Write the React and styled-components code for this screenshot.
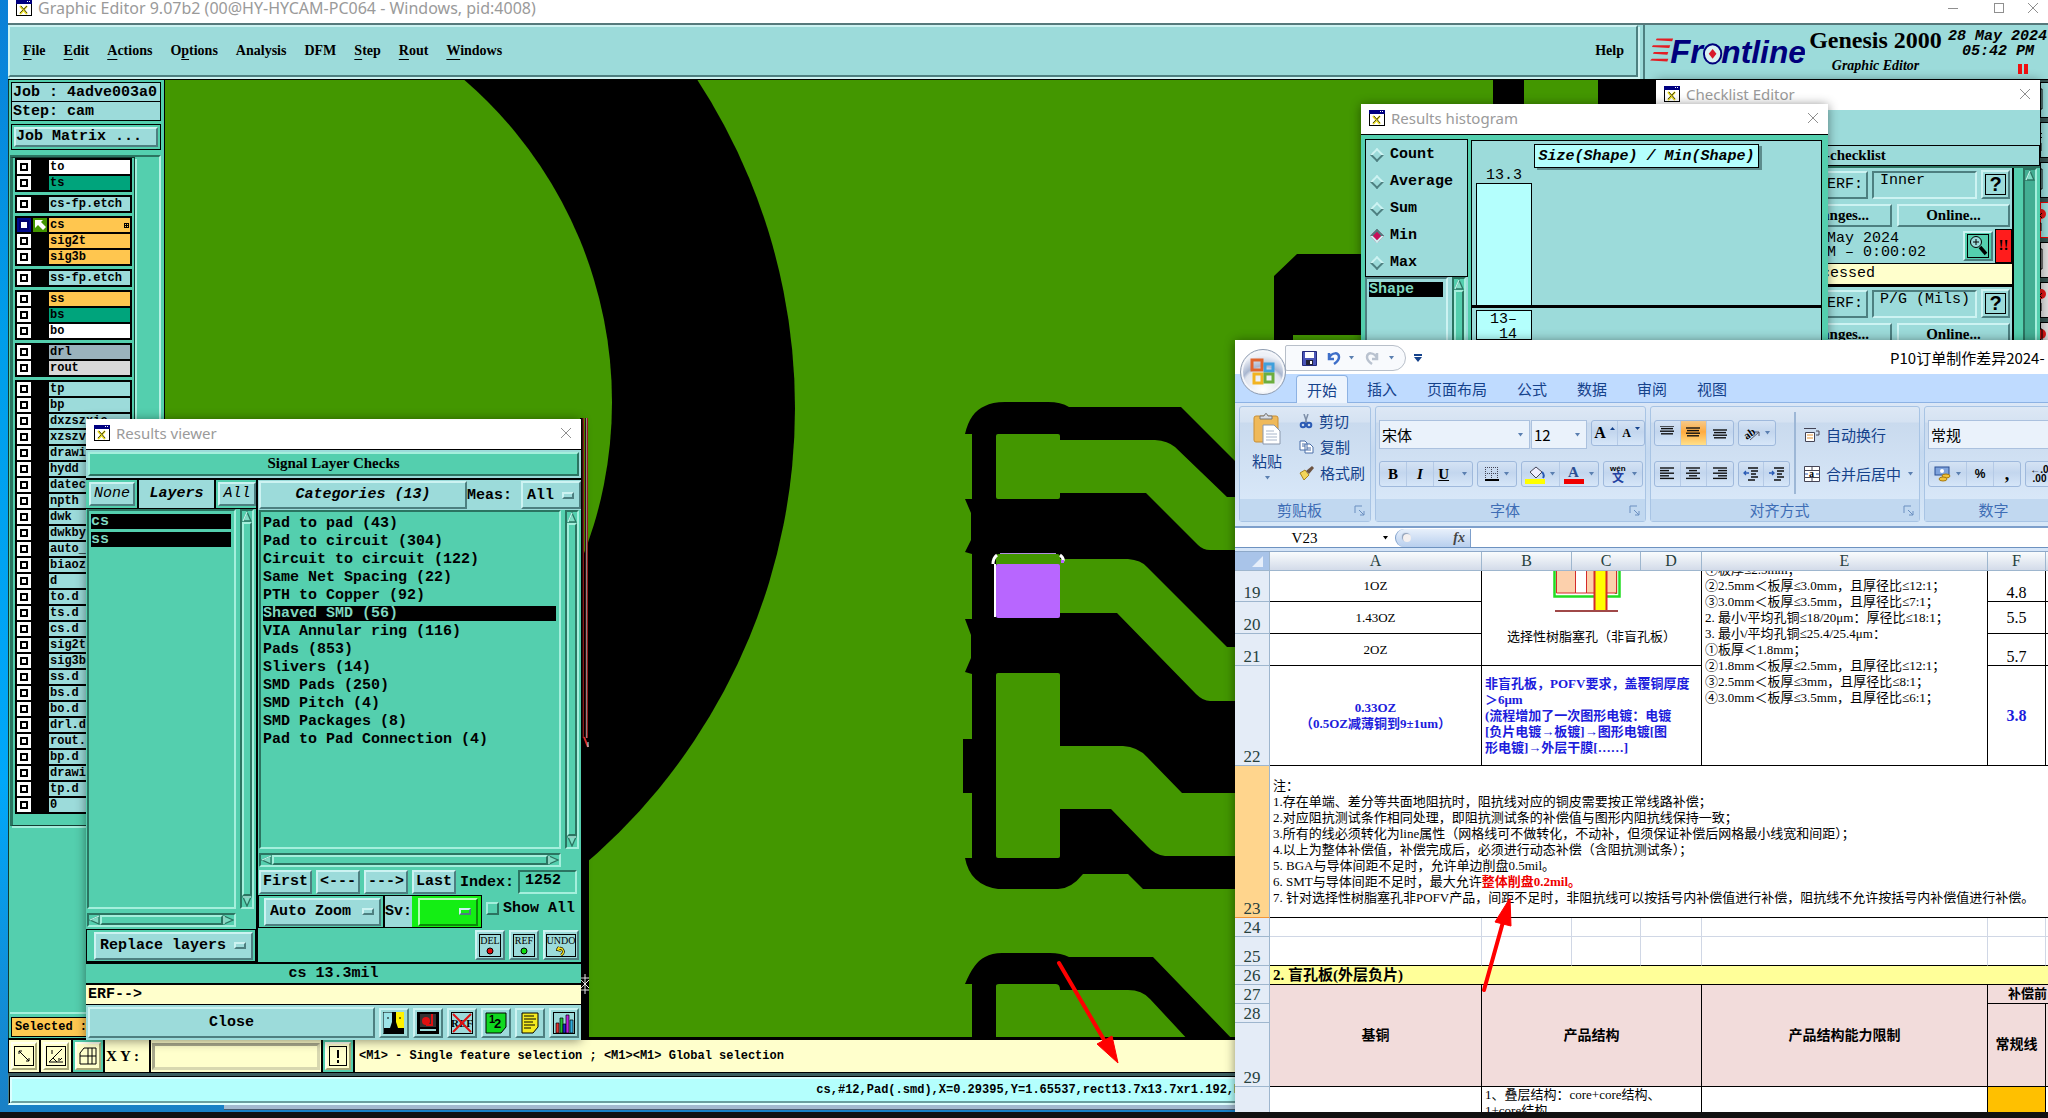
import React, { useState } from 'react';
import styled, { createGlobalStyle, css } from 'styled-components';

const MONO = '"Liberation Mono", monospace';
const SERIF = '"Liberation Serif", "Noto Sans CJK SC", serif';
const UI = '"Noto Sans", "Noto Sans CJK SC", sans-serif';
const CJK = '"Noto Sans CJK SC", sans-serif';

const AQUA = '#9cdbda';
const TEAL = '#54cfae';
const CREAM = '#ffffcc';
const GREEN = '#439700';

const GlobalStyle = createGlobalStyle`
  *, *::after { box-sizing: border-box; }
  body { margin: 0; overflow: hidden; font-family: ${MONO}; color: #000; }
  button, input, select { font: inherit; color: inherit; margin: 0; padding: 0; border-radius: 0; }
  svg { display: block; }
`;

// Motif style bevels
const raised = css`
  border: 2px solid;
  border-color: #cdf3f2 #4d7f80 #4d7f80 #cdf3f2;
`;
const raisedTeal = css`
  border: 2px solid;
  border-color: #a4efdc #2b7461 #2b7461 #a4efdc;
`;
const sunkenTeal = css`
  border: 2px solid;
  border-color: #2b7461 #a4efdc #a4efdc #2b7461;
`;

/* ---------- desktop ---------- */

const Desktop = styled.div`
  display: flex;
  flex-direction: column;
  height: 100vh;
  background: linear-gradient(#0b7fd6, #009eea 30%, #00a8fa 70%, #1a7fc4);
`;

const Workspace = styled.main`
  position: relative;
  flex: 1;
  overflow: hidden;
`;

const Taskbar = styled.footer`
  height: 6px;
  background: #111;
`;

const BackWindow = styled.div`
  position: absolute;
  left: 224px;
  right: 0;
  bottom: 2px;
  height: 8px;
  background: #a3bad0;
  border-bottom: 1px solid #45586c;
`;

const Window = styled.section`
  position: absolute;
  display: flex;
  flex-direction: column;
  overflow: hidden;
  box-shadow: ${p => (p.flat ? 'none' : '0 1px 10px rgba(0, 0, 0, 0.45)')};
  left: ${p => p.left}px;
  top: ${p => p.top}px;
  ${p => (p.width ? `width: ${p.width}px;` : 'right: 0;')}
  ${p => p.bottom !== undefined && `bottom: ${p.bottom}px;`}
  ${p => p.height && `height: ${p.height}px;`}
`;

const TitleBar = styled.header`
  display: flex;
  flex: none;
  align-items: center;
  gap: 6px;
  height: ${p => (p.cut ? 23 : 30)}px;
  padding: ${p => (p.cut ? '0 7px 8px 8px' : '0 7px 2px 8px')};
  background: #fff;
  color: #9a9a9a;
  font-family: ${UI};
  font-size: ${p => (p.cut ? 16 : 15)}px;
  line-height: 16px;
  white-space: nowrap;
  h2 {
    flex: 1;
    margin: 0;
    font: inherit;
  }
`;

const WinButton = styled.button`
  display: grid;
  place-items: center;
  width: ${p => (p.wide ? 40 : 16)}px;
  height: 16px;
  border: 0;
  background: none;
`;

const XIcon = () => (
  <svg width="16" height="16" viewBox="0 0 16 16">
    <rect x="0.5" y="0.5" width="15" height="15" fill="#fff" stroke="#000" />
    <rect x="0" y="0" width="16" height="4" fill="#000080" />
    <rect x="11" y="1" width="1" height="1" fill="#fff" />
    <rect x="13" y="1" width="1" height="1" fill="#fff" />
    <path d="M4 6l7 8M11 6l-7 8" stroke="#e8dc20" strokeWidth="2" />
    <path d="M5 6l6 7M11 6l-3 3M7 10l-3 3" stroke="#222" strokeWidth="0.8" />
  </svg>
);

const CloseX = () => (
  <svg width="12" height="12" viewBox="0 0 12 12" stroke="#8f8f8f" fill="none">
    <path d="M1 1l10 10M11 1L1 11" />
  </svg>
);

const Title = ({ children }) => (
  <TitleBar>
    <XIcon />
    <h2>{children}</h2>
    <WinButton aria-label="Close window"><CloseX /></WinButton>
  </TitleBar>
);

/* ---------- menu bar ---------- */

const TopRow = styled.div`
  display: flex;
  flex: none;
  height: 57px;
  background: ${AQUA};
  border-top: 2px solid #56797b;
  border-bottom: 1px solid #000;
`;

const MenuBar = styled.nav`
  display: flex;
  flex: 1;
  align-items: center;
  gap: 18px;
  padding: 0 12px 0 13px;
  border: 2px solid;
  border-color: #cdf3f2 #4d7f80 #4d7f80 #cdf3f2;
  box-shadow: 2px 2px 0 #cdf3f2;
  margin: 0 5px 2px 0;
`;

const MenuItem = styled.button`
  border: 0;
  background: none;
  font: bold 14px/18px ${SERIF};
  ${p => p.last && 'margin-left: auto;'}
  u {
    text-underline-offset: 4px;
  }
`;

const Brand = styled.div`
  display: flex;
  gap: 4px;
  width: 405px;
  padding: 4px 0 0 5px;
  border-left: 2px solid #4d7f80;
  overflow: hidden;
  white-space: nowrap;
`;

const BrandName = styled.div`
  width: 138px;
  text-align: center;
  font-family: ${SERIF};
  strong {
    display: block;
    font-size: 24px;
    line-height: 22px;
  }
  em {
    display: block;
    margin-top: 8px;
    font-size: 14px;
    line-height: 14px;
    font-weight: bold;
  }
`;

const Clock = styled.time`
  flex: none;
  width: 100px;
  margin-left: 2px;
  font: italic bold 15px/15px ${MONO};
  span {
    display: block;
    padding-right: 14px;
    text-align: right;
  }
  svg {
    margin: 5px 0 0 70px;
  }
`;

const FrontlineLogo = () => (
  <svg width="161" height="40" viewBox="0 0 161 40" aria-label="Frontline">
    <g fill="#e31e24">
      <path d="M7 9h17l-1 3-17-1zM3 16h18l-1 3-18-1zM4 23h15l-1 3-15-1zM2 30h17l-1 3-18-1z" />
    </g>
    <text x="21" y="35" fontFamily="Liberation Sans, sans-serif" fontSize="34" fontWeight="bold" fontStyle="italic" fill="#00007c">Fr</text>
    <ellipse cx="65" cy="25" rx="9" ry="10" fill="#d9f2f2" stroke="#00007c" strokeWidth="2" />
    <path d="M65 20l4 5-4 5-4-5z" fill="#d81a2c" />
    <text x="74" y="35" fontFamily="Liberation Sans, sans-serif" fontSize="33" fontWeight="bold" fontStyle="italic" fill="#00007c">ntline</text>
  </svg>
);

const MENUS = [
  ['F', 'ile'], ['E', 'dit'], ['A', 'ctions'], ['O', 'ptions', 'p'], ['', 'Analysis'],
  ['', 'DFM'], ['S', 'tep'], ['R', 'out'], ['W', 'indows'],
];

/* ---------- layer panel ---------- */

const Body = styled.div`
  display: flex;
  flex: 1;
  min-height: 0;
`;

const Side = styled.aside`
  display: flex;
  flex-direction: column;
  flex: none;
  width: 157px;
  padding: 2px 3px 0 1px;
  background: ${TEAL};
  border-left: 1px solid #143c32;
  border-right: 1px solid #000;
`;

const JobLine = styled.div`
  height: 20px;
  margin: 0 0 -1px 1px;
  padding: 0 1px;
  border: 1px solid #000;
  background: ${AQUA};
  font-size: 15px;
  line-height: 19px;
  font-weight: bold;
  white-space: nowrap;
  overflow: hidden;
`;

const MatrixFrame = styled.div`
  height: 26px;
  margin: 4px 0 5px 1px;
  padding: 2px;
  border: 1px solid #000;
`;

const MatrixButton = styled.button`
  ${raised}
  display: block;
  width: 100%;
  height: 20px;
  background: ${AQUA};
  font-size: 15px;
  line-height: 16px;
  font-weight: bold;
  text-align: left;
`;

const LayerWell = styled.div`
  flex: 1;
  min-height: 0;
  border-top: 2px solid #2b7461;
  border-right: 2px solid #b7f1e4;
  border-bottom: 2px solid #a4efdc;
`;

const LayerList = styled.ul`
  display: flex;
  flex-direction: column;
  gap: 3px;
  width: 125px;
  height: 669px;
  margin: 0;
  padding: 0 0 0 2px;
  list-style: none;
  border: 1px solid #143c32;
  border-left: 3px solid #2b7461;
  box-shadow: 2px 2px 0 #a4efdc;
`;

const LayerGroup = styled.li`
  display: grid;
  gap: 2px;
  width: 117px;
  padding: 2px;
  background: #000;
`;

const LayerRow = styled.label`
  display: grid;
  grid-template-columns: 14px 14px 1fr;
  gap: 2px;
  height: 14px;
  font-size: 12px;
  line-height: 14px;
  font-weight: bold;
`;

const LayerBox = styled.input`
  appearance: none;
  width: 14px;
  height: 14px;
  background: #fff;
  box-shadow: inset 0 0 0 3px #fff, inset 0 0 0 5px #000;
  &:checked {
    box-shadow: inset 0 0 0 2px #000a8c, inset 0 0 0 4px #00006c;
  }
`;

const LayerName = styled.span`
  display: flex;
  align-items: center;
  justify-content: space-between;
  padding: 0 1px;
  background: ${p => p.tone};
  overflow: hidden;
`;

const SelectedCount = styled.div`
  height: 20px;
  margin: 3px 0 1px 1px;
  padding: 0 3px;
  border: 1px solid #000;
  background: #ffc850;
  font-size: 12px;
  line-height: 18px;
  font-weight: bold;
`;

const ORANGE = '#ffc64f';
const PINE = '#00a47c';
const rest = names => names.split(' ').map(name => [name, AQUA]);

const LAYERS = [
  [['to', '#fff'], ['ts', PINE]],
  [['cs-fp.etch', AQUA]],
  [['cs', ORANGE], ['sig2t', ORANGE], ['sig3b', ORANGE]],
  [['ss-fp.etch', AQUA]],
  [['ss', ORANGE], ['bs', PINE], ['bo', '#fff']],
  [['drl', '#9ab2bc'], ['rout', '#d8d8d8']],
  rest('tp bp dxzszxie xzszv drawing hydd datecode npth dwk dwkby auto_ biaozhu d to.d ts.d cs.d sig2t.d sig3b.d ss.d bs.d bo.d drl.d rout.d bp.d drawing.d tp.d 0'),
];

const LayerPanel = () => {
  const [active, setActive] = useState('cs');
  return (
    <Side>
      <JobLine>Job : 4adve003a0</JobLine>
      <JobLine>Step: cam</JobLine>
      <MatrixFrame><MatrixButton>Job Matrix ...</MatrixButton></MatrixFrame>
      <LayerWell>
        <LayerList>
          {LAYERS.map(group => (
            <LayerGroup key={group[0][0]}>
              {group.map(([name, tone]) => (
                <LayerRow key={name}>
                  <LayerBox type="checkbox" checked={active === name} onChange={() => setActive(name)} />
                  {active === name ? (
                    <svg width="14" height="14" viewBox="0 0 14 14">
                      <rect width="14" height="14" fill={GREEN} />
                      <path d="M2 2h8L8 4l5 5-3 3-5-5-3 3z" fill="#fff" />
                    </svg>
                  ) : <span />}
                  <LayerName tone={tone}>
                    {name}
                    {active === name && (
                      <svg width="5" height="5" viewBox="0 0 5 5"><path d="M0 0h5v5H0zM1 1v1h1V1zM3 1v1h1V1zM1 3v1h1V3zM3 3v1h1V3z" fillRule="evenodd" /></svg>
                    )}
                  </LayerName>
                </LayerRow>
              ))}
            </LayerGroup>
          ))}
        </LayerList>
      </LayerWell>
      <SelectedCount>Selected :</SelectedCount>
    </Side>
  );
};

/* ---------- board canvas ---------- */

const CanvasBox = styled.div`
  flex: 1;
  min-width: 0;
  overflow: hidden;
  background: ${GREEN};
  border-bottom: 1px solid #000;
`;

const Board = () => (
  <CanvasBox>
    <svg width="100%" height="100%">
      <g transform="translate(-165 -80)">
        <circle cx="195" cy="408" r="600" />
        <circle cx="187" cy="402" r="425" fill={GREEN} />
        <path d="M165 863h424v200H165z" fill={GREEN} />
        <path d="M580 418h3v320h-3zM580 560h9v478h-9z" />
        <path d="M583.500 418V738M587.500 418V738" fill="none" stroke="#a02020" />
        <path d="M582.500 418V738M585.500 418V738" fill="none" stroke="#3a1010" />
        <path d="M586.500 418V738" fill="none" stroke="#9a8a8a" />
        <path d="M584 737l4 10" stroke="#f03030" strokeWidth="2" />
        <path d="M588 742v5" stroke="#bff" />
        <path d="M965 434Q970 412 985 406Q992 402 1005 402H1048Q1061 402 1069 407H1181L1240 466V889H1143L1128 874H1083Q1071 889 1058 889H998Q970 885 965 858H972V793H963V739H972V674L965 672L971 658V635L965 619H972V554L965 552L971 540V513L965 499H972V434Z" />
        <g fill={GREEN}>
          <rect x="996" y="434" width="64" height="65" rx="2" />
          <path d="M1058 440H1155Q1168 441 1175 447L1227 497H1240V550H1210Q1203 550 1198 545L1146 493H1058Z" />
          <path d="M1058 559H1128Q1141 560 1147 567L1227 647H1240V701H1210Q1203 701 1196 694L1117 613H1058Z" />
          <rect x="996" y="673" width="64" height="185" rx="2" />
          <path d="M1058 746H1123Q1138 747 1147 757L1182 793H1240V856H1165Q1155 855 1147 846L1111 809H1058Z" />
          <rect x="996" y="554" width="64" height="12" rx="3" />
        </g>
        <rect x="996" y="564" width="64" height="54" rx="2" fill="#b866ff" />
        <path d="M1000 553.500H1056" stroke="#b090e0" />
        <path d="M997 555q-4 3-4 9M1060 555q4 3 3 6" fill="none" stroke="#fff" strokeWidth="3" />
        <path d="M995 564V617" stroke="#fff" strokeWidth="2" />
        <path d="M1061 560h3v3h-3z" fill="#b866ff" />
        <path d="M965 984Q974 962 985 957Q992 953 1002 953H1050Q1061 953 1069 957H1153L1235 1042H972V984Z" />
        <path d="M996 1042V986q0-2 3-2H1056q4 0 4 6H1128Q1142 990 1150 999L1190 1042Z" fill={GREEN} />
        <path d="M1274 276L1297 254H1370V335H1293V345H1274ZM1493 80h31v30h-31zM1598 80h60v30h-60z" />
        <path d="M585 974v20M581 978h8M581 990h8M581 980l8 8M589 980l-8 8" stroke="#fff" fill="none" />
      </g>
    </svg>
  </CanvasBox>
);

const ToolStrip = styled.div`
  width: 8px;
  flex: none;
  display: flex;
  flex-direction: column;
  gap: 4px;
  padding-top: 2px;
  background: #35524f;
  overflow: hidden;
`;

const StripButton = styled.button`
  flex: none;
  width: 30px;
  height: 36px;
  border: 1px solid ${p => (p.hot ? '#e00' : '#000')};
  background: ${p => p.tone || AQUA};
  svg {
    margin-left: -4px;
  }
`;

/* ---------- bottom bars ---------- */

const CommandRow = styled.div`
  display: flex;
  flex: none;
  gap: 2px;
  height: 35px;
  padding: 2px 0 1px 1px;
  background: #000;
`;

const CreamCell = styled.div`
  display: flex;
  align-items: center;
  flex: ${p => (p.grow ? 1 : 'none')};
  padding: ${p => p.pad || '0 2px'};
  background: ${p => (p.teal ? TEAL : CREAM)};
  font: bold ${p => (p.big ? '15px/18px' : '12px/16px')} ${p => (p.big ? SERIF : MONO)};
  white-space: nowrap;
`;

const CreamButton = styled.button`
  display: grid;
  place-items: center;
  width: 26px;
  height: 28px;
  border: 2px solid;
  border-color: #fffff0 #a8a878 #a8a878 #fffff0;
  background: ${CREAM};
  svg {
    width: 20px;
    height: 20px;
  }
`;

const CoordInput = styled.input`
  width: 168px;
  height: 27px;
  border: 3px solid;
  border-color: #a8a88c #d8d8b0 #d8d8b0 #a8a88c;
  background: ${CREAM};
  outline: 0;
  font-size: 14px;
`;

const InfoFrame = styled.div`
  flex: none;
  height: 32px;
  padding: 1px;
  border: solid;
  border-width: 3px 1px 2px 1px;
  border-color: #3d5f60 #000 #dff #4d7f80;
  background: #000;
  div {
    height: 26px;
    padding-left: 16px;
    border: 2px solid;
    border-color: #dcffff #6aa0a0 #6aa0a0 #dcffff;
    background: #b4fffd;
    font-size: 12px;
    line-height: 22px;
    font-weight: bold;
    text-align: center;
    white-space: nowrap;
  }
`;

const MainWindow = () => (
  <Window left={8} top={0} bottom={7} flat>
    <TitleBar cut>
      <XIcon />
      <h2>Graphic Editor 9.07b2 (00@HY-HYCAM-PC064 - Windows, pid:4008)</h2>
      <WinButton wide aria-label="Minimize"><svg width="12" height="12"><path d="M1 6.5h10" stroke="#8f8f8f" /></svg></WinButton>
      <WinButton wide aria-label="Maximize"><svg width="12" height="12"><rect x="1.5" y="1.5" width="9" height="9" fill="none" stroke="#8f8f8f" /></svg></WinButton>
      <WinButton aria-label="Close"><CloseX /></WinButton>
    </TitleBar>
    <TopRow>
      <MenuBar>
        {MENUS.map(([key, tail, inner]) => (
          <MenuItem key={key + tail}>
            {inner ? <>{key}<u>{inner}</u>{tail.slice(1)}</> : <>{key && <u>{key}</u>}{tail}</>}
          </MenuItem>
        ))}
        <MenuItem last>Help</MenuItem>
      </MenuBar>
      <Brand>
        <FrontlineLogo />
        <BrandName>
          <strong>Genesis 2000</strong>
          <em>Graphic Editor</em>
        </BrandName>
        <Clock>
          28 May 2024
          <span>05:42 PM</span>
          <svg width="12" height="10"><path d="M0 0h4v10H0zM6 0h4v10H6z" fill="#f01010" /></svg>
        </Clock>
      </Brand>
    </TopRow>
    <Body>
      <LayerPanel />
      <Board />
      <ToolStrip>
        {[0, 1, 2, 3, 4, 5, 6].map(i => (
          <StripButton key={i} hot={i === 3} tone={i > 3 ? '#ddd' : undefined} aria-label={'Tool ' + (i + 1)}>
            <svg width="10" height="26" viewBox="0 0 10 26">
              {i > 2 && i !== 4 ? <circle cx="4" cy="7" r="5" fill="#e01515" /> : null}
              <path d={i % 2 ? 'M0 6l5 5M5 6l-5 5M0 16h4v8' : 'M0 2h5v20H0M0 14l3 3'} fill="none" stroke="#000" />
            </svg>
          </StripButton>
        ))}
      </ToolStrip>
    </Body>
    <CommandRow>
      <CreamCell>
        <CreamButton aria-label="Measure"><svg viewBox="0 0 20 20" fill="none" stroke="#000"><rect x="0.5" y="0.5" width="19" height="19" /><path d="M5 5l10 10M5 8V5h3M15 12v3h-3" /></svg></CreamButton>
      </CreamCell>
      <CreamCell>
        <CreamButton aria-label="Angle"><svg viewBox="0 0 20 20" fill="none" stroke="#000"><rect x="0.5" y="0.5" width="19" height="19" /><path d="M16 3L3 16h14M6 4v4M7 12l4 4M13 12v3M16 12l-2 2" /></svg></CreamButton>
      </CreamCell>
      <CreamCell teal>
        <CreamButton aria-label="Grid"><svg viewBox="0 0 20 20" fill="none" stroke="#000"><path d="M6 2h12v16H2V7zM10 2v16M2 10h16M14 2v16" /></svg></CreamButton>
      </CreamCell>
      <CreamCell big pad="0 10px 0 1px"><label htmlFor="xy">X Y :</label></CreamCell>
      <CreamCell pad="0 1px"><CoordInput id="xy" defaultValue="" /></CreamCell>
      <CreamCell teal>
        <CreamButton aria-label="Execute"><svg viewBox="0 0 20 20" fill="none" stroke="#000"><rect x="1.5" y="0.5" width="17" height="19" /><path d="M10 4v8M10 14v3" strokeWidth="2" /></svg></CreamButton>
      </CreamCell>
      <CreamCell grow pad="0 4px">{'<M1> - Single feature selection ; <M1><M1> Global selection'}</CreamCell>
    </CommandRow>
    <InfoFrame><div>cs,#12,Pad(.smd),X=0.29395,Y=1.65537,rect13.7x13.7xr1.192,POS</div></InfoFrame>
  </Window>
);

/* ---------- shared X widgets ---------- */

const PushButton = styled.button`
  ${raised}
  height: ${p => p.h || 24}px;
  padding: 0 ${p => (p.pad === undefined ? 2 : p.pad)}px;
  background: ${AQUA};
  font-family: ${p => (p.serif ? SERIF : MONO)};
  font-size: 15px;
  line-height: 18px;
  font-weight: ${p => (p.light ? 'normal' : 'bold')};
  font-style: ${p => (p.italic ? 'italic' : 'normal')};
  white-space: nowrap;
  ${p => p.grow && 'flex: 1;'}
  ${p => p.w && `width: ${p.w}px;`}
`;

const Bar = styled.div`
  ${sunkenTeal}
  display: flex;
  flex: none;
  flex-direction: ${p => (p.across ? 'row' : 'column')};
  ${p => (p.across ? 'height: 14px;' : 'width: 14px;')}
  background: ${p => (p.deep ? '#43ae93' : TEAL)};
  overflow: hidden;
`;

const Thumb = styled.div`
  ${raisedTeal}
  flex: 1;
`;

const arrows = {
  up: 'M5 1L9 10H1z',
  down: 'M1 1H9L5 10z',
  left: 'M1 5L10 1V9z',
  right: 'M1 1L10 5L1 9z',
};

const edges = {
  up: 'M5 1L1 10',
  down: 'M1 1H9',
  left: 'M1 5L10 1',
  right: 'M1 1v8',
};

const Arrow = ({ dir }) => {
  const flat = dir === 'left' || dir === 'right';
  return (
    <svg width={flat ? 11 : 10} height={flat ? 10 : 11} viewBox={flat ? '0 0 11 10' : '0 0 10 11'}>
      <path d={arrows[dir]} fill="#7fdcc4" stroke="#2b7461" strokeWidth="1.3" />
      <path d={edges[dir]} stroke="#bdf5e8" strokeWidth="1.3" />
    </svg>
  );
};

const ScrollBar = ({ across, bare, deep }) => (
  <Bar across={across} deep={deep} aria-hidden="true">
    <Arrow dir={across ? 'left' : 'up'} />
    {!deep && <Thumb />}
    {!bare && <Arrow dir={across ? 'right' : 'down'} />}
  </Bar>
);

const OptionBox = styled.div`
  ${raised}
  ${p => p.tone && 'border-color: #b0ffb0 #0b8a0b #0b8a0b #b0ffb0;'}
  display: flex;
  align-items: center;
  flex: ${p => (p.w ? 'none' : 1)};
  ${p => p.w && `width: ${p.w}px;`}
  height: 28px;
  padding: 0 5px 0 4px;
  background: ${p => p.tone || AQUA};
  &::after {
    content: '';
    ${raised}
    flex: none;
    width: 12px;
    height: 7px;
  }
  select {
    appearance: none;
    flex: 1;
    min-width: 0;
    border: 0;
    background: transparent;
    font-size: 15px;
    font-weight: bold;
  }
`;

const OptionMenu = ({ label, value, w, tone }) => (
  <OptionBox w={w} tone={tone}>
    <select aria-label={label} defaultValue={value}><option value={value}>{value}</option></select>
  </OptionBox>
);

/* ---------- results viewer ---------- */

const Heading = styled.div`
  flex: none;
  height: 31px;
  padding: 2px;
  border-top: 1px solid #000;
  border-bottom: 2px solid #000;
  background: ${AQUA};
  div {
    ${raisedTeal}
    height: 24px;
    background: ${TEAL};
    font: bold 15px/19px ${SERIF};
    text-align: center;
  }
`;

const Columns = styled.div`
  display: grid;
  grid-template-columns: 170px 1fr;
  gap: 2px;
  flex: 1;
  min-height: 0;
  background: #000;
  border-bottom: 2px solid #000;
`;

const Column = styled.div`
  display: flex;
  flex-direction: column;
  min-height: 0;
  min-width: 0;
  background: ${TEAL};
`;

const HeadRow = styled.div`
  display: flex;
  flex: none;
  align-items: center;
  height: ${p => (p.line ? 29 : 30)}px;
  padding-left: ${p => (p.line ? 3 : 1)}px;
  border-bottom: ${p => (p.line ? '1px solid #000' : '0')};
  background: ${p => (p.line ? TEAL : AQUA)};
  font-size: 15px;
  font-weight: bold;
`;

const LayersLabel = styled.div`
  flex: 1;
  margin: 0 2px;
  border: solid #000;
  border-width: 0 2px;
  background: ${AQUA};
  line-height: 28px;
  text-align: center;
  font-style: italic;
`;

const ListArea = styled.div`
  display: grid;
  grid-template-columns: 1fr 14px;
  grid-template-rows: 1fr 14px;
  gap: 4px;
  flex: 1;
  min-height: 0;
  padding: 0 2px 2px 1px;
`;

const List = styled.ul`
  ${sunkenTeal}
  margin: 0;
  padding: ${p => (p.snug ? 3 : 4)}px 3px 0 2px;
  list-style: none;
  font-size: 15px;
  font-weight: bold;
  white-space: nowrap;
`;

const Item = styled.li`
  height: 15px;
  margin-bottom: 3px;
  line-height: 15px;
  ${p => p.on && 'background: #000; color: #7fd8c0;'}
`;

const ToolRow = styled.div`
  display: flex;
  flex: none;
  align-items: center;
  gap: ${p => p.gap || 0}px;
  height: ${p => p.h}px;
  padding: ${p => p.pad || '0'};
  background: ${p => p.tone || 'transparent'};
  font-size: 15px;
  font-weight: bold;
  ${p => p.end && 'justify-content: flex-end;'}
  ${p => p.box && 'border: 1px solid #000;'}
`;

const IndexInput = styled.input`
  ${sunkenTeal}
  width: 59px;
  height: 24px;
  padding: 0 0 3px 5px !important;
  background: ${TEAL};
  font-size: 15px;
  font-weight: bold;
`;

const SvBox = styled.label`
  display: flex;
  align-items: center;
  height: 33px;
  border: 1px solid #000;
  background: ${AQUA};
  span {
    display: flex;
    align-items: center;
    height: 31px;
    padding: 0 3px 0 6px;
    background: #14ee14;
  }
`;

const ShowAll = styled.label`
  display: flex;
  align-items: center;
  gap: 4px;
  margin-left: 4px;
  padding-bottom: 6px;
  input {
    ${raisedTeal}
    appearance: none;
    width: 13px;
    height: 13px;
  }
`;

const IconButton = styled.button`
  ${raised}
  display: grid;
  place-items: center;
  width: ${p => p.w || 30}px;
  height: 30px;
  background: ${p => (p.teal ? TEAL : AQUA)};
`;

const Tag = styled.span`
  display: flex;
  flex-direction: column;
  align-items: center;
  width: ${p => p.w || 22}px;
  height: 23px;
  border: 1px solid #000;
  font: 10px/11px ${SERIF};
`;

const StatusLine = styled.div`
  flex: none;
  height: ${p => (p.cream ? 20 : 21)}px;
  padding-left: ${p => (p.cream ? 2 : 0)}px;
  border-bottom: ${p => (p.cream ? 1 : 2)}px solid #000;
  background: ${p => (p.cream ? CREAM : TEAL)};
  font-size: 15px;
  line-height: 20px;
  font-weight: bold;
  text-align: ${p => (p.cream ? 'left' : 'center')};
`;

const CATEGORIES = [
  'Pad to pad (43)', 'Pad to circuit (304)', 'Circuit to circuit (122)', 'Same Net Spacing (22)',
  'PTH to Copper (92)', 'Shaved SMD (56)', 'VIA Annular ring (116)', 'Pads (853)', 'Slivers (14)',
  'SMD Pads (250)', 'SMD Pitch (4)', 'SMD Packages (8)', 'Pad to Pad Connection (4)',
];

const Glyph = ({ children }) => <svg width="22" height="22" viewBox="0 0 22 22">{children}</svg>;

const ResultsViewer = () => (
  <Window left={86} top={419} width={495} height={621}>
    <Title>Results viewer</Title>
    <Heading><div>Signal Layer Checks</div></Heading>
    <Columns>
      <Column>
        <HeadRow line>
          <PushButton italic light w={46} pad={0}>None</PushButton>
          <LayersLabel>Layers</LayersLabel>
          <PushButton italic light w={38} pad={0}>All</PushButton>
        </HeadRow>
        <ListArea>
          <List snug>
            <Item on>cs</Item>
            <Item on>ss</Item>
          </List>
          <ScrollBar />
          <ScrollBar across />
        </ListArea>
        <ToolRow h={33} box pad="0 2px 0 7px">
          <OptionMenu label="Layer mode" value="Replace layers" />
        </ToolRow>
      </Column>
      <Column>
        <HeadRow>
          <PushButton italic grow h={28}>Categories (13)</PushButton>
          <span>Meas:&nbsp;</span>
          <OptionMenu label="Measurement" value="All" w={60} />
        </HeadRow>
        <ListArea>
          <List>
            {CATEGORIES.map(name => <Item key={name} on={name.startsWith('Shaved')}>{name}</Item>)}
          </List>
          <ScrollBar />
          <ScrollBar across />
        </ListArea>
        <ToolRow h={26} gap={4} pad="0 1px">
          <PushButton w={53}>First</PushButton>
          <PushButton w={44}>{'<---'}</PushButton>
          <PushButton w={44}>{'--->'}</PushButton>
          <PushButton w={44}>Last</PushButton>
          <label htmlFor="index">Index:</label>
          <IndexInput id="index" defaultValue="1252" />
        </ToolRow>
        <ToolRow h={33}>
          <ToolRow h={33} box pad="0 2px 0 5px">
            <OptionMenu label="Zoom mode" value="Auto Zoom" w={117} />
          </ToolRow>
          <SvBox>Sv:<span><OptionMenu label="Severity" value="" w={60} tone="#14ee14" /></span></SvBox>
          <ShowAll><input type="checkbox" />Show All</ShowAll>
        </ToolRow>
        <ToolRow h={34} gap={4} end pad="0 2px">
          <IconButton aria-label="Delete"><Tag>DEL<svg width="8" height="9"><circle cx="4" cy="5" r="3" fill="#e01010" stroke="#000" /></svg></Tag></IconButton>
          <IconButton aria-label="Reference"><Tag>REF<svg width="8" height="9"><circle cx="4" cy="5" r="3" fill="#10e010" stroke="#000" /></svg></Tag></IconButton>
          <IconButton aria-label="Undo" w={36}><Tag w={30}>UNDO<svg width="10" height="11" viewBox="0 0 10 11" fill="none"><path d="M3 1L1 4l4 1M2 3c5-2 8 4 3 7" stroke="#000" strokeWidth="3" /><path d="M3 1L1 4l4 1M2 3c5-2 8 4 3 7" stroke="#f4e020" strokeWidth="1.5" /></svg></Tag></IconButton>
        </ToolRow>
      </Column>
    </Columns>
    <StatusLine>cs 13.3mil</StatusLine>
    <StatusLine cream>{'ERF-->'}</StatusLine>
    <ToolRow h={35} gap={4} pad="0 2px" tone={AQUA}>
      <PushButton grow h={31}>Close</PushButton>
      <IconButton aria-label="Contrast"><Glyph><path d="M0 0h11v22H0z" fill="#9ce4e8" stroke="#000" /><path d="M11 0h10v22H11z" fill="#fff200" /><path d="M9 0h4v10l2 6h6v6H1v-6h6l2-6z" /><path d="M4 6h2M16 6h2" stroke="#000" /></Glyph></IconButton>
      <IconButton aria-label="Snapshot"><Glyph><rect width="22" height="22" /><rect x="3" y="2" width="16" height="13" fill="#333" /><circle cx="9" cy="9" r="4" fill="#e01010" /><path d="M15 2v11H9" fill="none" stroke="#e01010" strokeWidth="2" /><path d="M3 18h16" stroke="#9cdbda" strokeWidth="2" /></Glyph></IconButton>
      <IconButton aria-label="Remove reference"><Glyph><rect x="0.5" y="0.5" width="21" height="21" fill="none" stroke="#000" /><text x="0" y="15" fontSize="11" fontFamily="Liberation Serif, serif">REF</text><path d="M2 2l18 18M20 2L2 20" stroke="#e01010" strokeWidth="2" /></Glyph></IconButton>
      <IconButton aria-label="Renumber"><Glyph><path d="M1 1h20v14l-5 6H1z" fill="#10d820" stroke="#000" /><text x="4" y="11" fontSize="11" fontWeight="bold" fontFamily="Liberation Sans, sans-serif">1</text><text x="9" y="16" fontSize="13" fontWeight="bold" fontFamily="Liberation Sans, sans-serif">2</text></Glyph></IconButton>
      <IconButton aria-label="Report"><Glyph><path d="M3 1h16v14l-5 6H3z" fill="#f4ea20" stroke="#000" /><path d="M5 4h10M5 7h12M5 10h9M5 13h11M5 16h7" stroke="#000" /></Glyph></IconButton>
      <IconButton aria-label="Histogram"><Glyph><rect x="0.5" y="0.5" width="21" height="21" fill="none" stroke="#000" /><g stroke="#000" strokeWidth="0.7"><path d="M3 11h3v10H3z" fill="#e03030" /><path d="M7 6h3v15H7z" fill="#20c030" /><path d="M10 12h3v9h-3z" fill="#2020d0" /><path d="M13 3h3v18h-3z" fill="#c020e0" /><path d="M17 8h3v13h-3z" fill="#30b0e0" /></g></Glyph></IconButton>
    </ToolRow>
  </Window>
);

/* ---------- checklist editor ---------- */

const CheckBody = styled.div`
  display: flex;
  flex: 1;
  min-height: 0;
  padding-right: 3px;
  background: ${TEAL};
  border-top: 2px solid #2b7461;
`;

const CheckHead = styled.div`
  flex: none;
  height: 56px;
  background: ${AQUA};
  div {
    margin-top: 35px;
    height: 21px;
    padding-left: 168px;
    border: 1px solid #000;
    font: bold 15px/19px ${SERIF};
  }
`;

const CheckItems = styled.div`
  flex: 1;
  margin-right: 9px;
  border-right: 2px solid #000;
  background: ${AQUA};
`;

const Entry = styled.div`
  display: grid;
  grid-template-rows: 33px 28px 34px 21px;
  height: 119px;
  border-bottom: 3px solid #000;
  font-size: 15px;
`;

const ErfRow = styled.div`
  display: flex;
  align-items: center;
  gap: 4px;
  padding-right: 2px;
  label {
    ${raised}
    flex: 1;
    height: 28px;
    padding-right: 3px;
    line-height: 24px;
    text-align: right;
  }
  input {
    width: 105px;
    height: 28px;
    padding: 0 0 8px 6px;
    border: 2px solid;
    border-color: #4d7f80 #cdf3f2 #cdf3f2 #4d7f80;
    background: ${AQUA};
  }
`;

const RunRow = styled.div`
  display: flex;
  align-items: center;
  padding-left: 171px;
  line-height: 14px;
  p {
    flex: 1;
    margin: 0;
    white-space: nowrap;
  }
`;

const Alarm = styled.span`
  width: 17px;
  height: 34px;
  margin-left: 2px;
  border: 1px solid #000;
  background: #ff1c1c;
  font: bold 15px/30px ${SERIF};
  text-align: center;
`;

const Processed = styled.div`
  padding-left: 138px;
  border-top: 1px solid #000;
  background: ${CREAM};
  line-height: 19px;
`;

const Help = styled.button`
  ${raised}
  width: 29px;
  height: 29px;
  padding: 2px !important;
  background: ${AQUA};
  span {
    display: block;
    border: 1px solid #000;
    font: bold 20px/19px "Liberation Sans", sans-serif;
  }
`;

const CheckEntry = ({ id, value }) => (
  <Entry>
    <ErfRow>
      <label htmlFor={id}>ERF:</label>
      <input id={id} defaultValue={value} />
      <Help aria-label="Help"><span>?</span></Help>
    </ErfRow>
    <ToolRow h={28} gap={5} pad="0 2px 0 124px">
      <PushButton serif w={112} h={23} pad={0}>Changes...</PushButton>
      <PushButton serif grow h={23}>Online...</PushButton>
    </ToolRow>
    <RunRow>
      <p>May 2024<br />M – 0:00:02</p>
      <IconButton teal aria-label="Inspect">
        <svg width="22" height="24" viewBox="0 0 22 24" fill="none" stroke="#000"><rect x="0.5" y="0.5" width="21" height="23" /><circle cx="9" cy="8" r="5.5" fill="#9cdbda" /><path d="M9 5v6M6 8h6" /><path d="M13 13l6 7" strokeWidth="3.5" /></svg>
      </IconButton>
      <Alarm>!!</Alarm>
    </RunRow>
    <Processed>Processed</Processed>
  </Entry>
);

const ChecklistEditor = () => (
  <Window left={1656} top={80} width={384} height={300}>
    <Title>Checklist Editor</Title>
    <CheckHead><div>-checklist</div></CheckHead>
    <CheckBody>
      <CheckItems>
        <CheckEntry id="erf-1" value="Inner" />
        <CheckEntry id="erf-2" value="P/G (Mils)" />
      </CheckItems>
      <ScrollBar deep bare />
    </CheckBody>
  </Window>
);

/* ---------- results histogram ---------- */

const HistBody = styled.div`
  display: grid;
  grid-template-columns: 103px 1fr;
  gap: 3px;
  flex: 1;
  padding: 4px 6px 0 4px;
  border-top: 1px solid #000;
  background: ${TEAL};
`;

const HistSide = styled.div`
  display: flex;
  flex-direction: column;
  background: ${AQUA};
`;

const Modes = styled.fieldset`
  display: grid;
  grid-template-rows: repeat(5, 27px);
  height: 138px;
  margin: 0;
  padding: 1px 0 0 6px;
  border: 1px solid #000;
  font-size: 15px;
  font-weight: bold;
  label {
    display: flex;
    align-items: center;
    gap: 8px;
  }
  input {
    appearance: none;
    width: 10px;
    height: 10px;
    border: 2px solid;
    border-color: #cdf3f2 #4d7f80 #4d7f80 #cdf3f2;
    transform: rotate(45deg);
  }
  input:checked {
    border-color: #4d7f80 #cdf3f2 #cdf3f2 #4d7f80;
    background: #c8105a;
  }
`;

const ShapeArea = styled.div`
  display: flex;
  flex: 1;
  gap: 4px;
  padding-right: 2px;
  ${List} {
    flex: 1;
    border-color: #4d7f80 #cdf3f2 #cdf3f2 #4d7f80;
  }
`;

const Chart = styled.div`
  display: flex;
  flex-direction: column;
  margin-top: 1px;
  border: 1px solid #000;
  background: ${AQUA};
  font-size: 15px;
  line-height: 15px;
  h3 {
    align-self: center;
    margin: 3px 0 0 0;
    padding: 2px 3px 0;
    border: 1px solid #000;
    box-shadow: 3px 2px 0 #5c8c8c;
    background: #b4fffd;
    font: italic bold 15px/20px ${MONO};
  }
`;

const Plot = styled.figure`
  margin: 0;
  padding: 0 4px;
  border-bottom: 3px solid #000;
  figcaption {
    width: 56px;
    text-align: center;
    line-height: 15px;
  }
`;

const ValueBar = styled.div`
  width: 56px;
  height: 122px;
  border: 1px solid #000;
  border-bottom: 0;
  background: #b4fffd;
`;

const Bin = styled.div`
  width: 56px;
  height: 30px;
  margin: 2px 0 0 4px;
  padding: 1px 14px 0 0;
  border: 1px solid #000;
  background: #b4fffd;
  text-align: right;
`;

const ResultsHistogram = () => {
  const [mode, setMode] = useState('Min');
  return (
    <Window left={1361} top={104} width={467} height={270}>
      <Title>Results histogram</Title>
      <HistBody>
        <HistSide>
          <Modes>
            {['Count', 'Average', 'Sum', 'Min', 'Max'].map(m => (
              <label key={m}><input type="radio" name="mode" checked={mode === m} onChange={() => setMode(m)} />{m}</label>
            ))}
          </Modes>
          <ShapeArea>
            <List snug><Item on>Shape</Item></List>
            <ScrollBar />
          </ShapeArea>
        </HistSide>
        <Chart>
          <h3>Size(Shape) / Min(Shape)</h3>
          <Plot>
            <figcaption>13.3</figcaption>
            <ValueBar />
          </Plot>
          <Bin>13–<br />14</Bin>
        </Chart>
      </HistBody>
    </Window>
  );
};

/* ---------- spreadsheet ---------- */

const QuickRow = styled.div`
  display: flex;
  flex: none;
  align-items: center;
  height: 34px;
  padding: 2px 0 0 50px;
  background: #fff;
  font: 15px/20px ${CJK};
  white-space: nowrap;
  overflow: hidden;
  span {
    flex: none;
    width: 158px;
    margin-left: auto;
  }
`;

const QuickTools = styled.div`
  display: flex;
  align-items: center;
  gap: 10px;
  width: 121px;
  height: 26px;
  margin-right: 8px;
  padding-left: 16px;
  border: 1px solid #b8bfc9;
  border-radius: 2px 13px 13px 2px;
  background: #f8fafd;
`;

const PlainButton = styled.button`
  display: flex;
  align-items: center;
  gap: ${p => p.gap || 0}px;
  border: 0;
  background: none;
  color: #15428b;
  font: 15px/20px ${CJK};
  white-space: nowrap;
`;

const OfficeButton = styled.button`
  position: absolute;
  left: 5px;
  top: 9px;
  width: 46px;
  height: 46px;
  border: 1px solid #8e9cb0;
  border-radius: 50% !important;
  background: radial-gradient(circle at 50% 90%, #fff, #dfe4ee 45%, #a8b6cf 52%, #eef1f7 75%);
  box-shadow: inset 0 0 0 2px #f4f6fa;
  svg {
    margin: 0 auto;
  }
`;

const Tabs = styled.div`
  display: flex;
  flex: none;
  align-items: flex-end;
  gap: 8px;
  height: 29px;
  padding-left: 61px;
  background: #bfdbff;
  border-bottom: 1px solid #8db2e3;
`;

const Tab = styled.button`
  width: ${p => p.children.length * 15 + 22}px;
  height: ${p => (p.on ? 28 : 27)}px;
  margin-bottom: ${p => (p.on ? -1 : 0)}px;
  border: 1px solid ${p => (p.on ? '#8db2e3' : 'transparent')};
  border-bottom: 0;
  border-radius: 4px 4px 0 0 !important;
  background: ${p => (p.on ? '#edf4fd' : 'none')};
  color: #15428b;
  font: 15px/20px ${CJK};
`;

const Ribbon = styled.div`
  display: flex;
  flex: none;
  gap: 4px;
  height: 125px;
  padding: 3px 0 4px 4px;
  background: linear-gradient(#dbe7f6, #c5d9f0 40%, #d8e8f8);
  border-bottom: 2px solid #7d9fcb;
  overflow: hidden;
`;

const Group = styled.div`
  display: flex;
  flex-direction: column;
  flex: none;
  width: ${p => p.w}px;
  border: 1px solid #a8c4e4;
  border-radius: 3px;
  background: linear-gradient(#dde8f5 0, #d5e2f2 15px, #c9daee 16px, #dcebfb);
`;

const GroupBody = styled.div`
  display: flex;
  flex: 1;
  padding: ${p => (p.tight ? '5px 8px 0 12px' : '0 3px')};
`;

const GroupName = styled.div`
  display: flex;
  align-items: center;
  height: 22px;
  padding: ${p => (p.wide ? '0 106px 0 5px' : '0 5px')};
  background: #c1d8f0;
  color: #3e6db5;
  font: 15px/20px ${CJK};
  text-align: center;
  span {
    flex: 1;
  }
`;

const Launcher = () => (
  <svg width="11" height="11" viewBox="0 0 11 11" fill="none" stroke="#6a8fc0"><path d="M1 8V1h7M5 5l5 5M10 6v4H6" /></svg>
);

const Caret = ({ dark }) => (
  <svg width="7" height="4" viewBox="0 0 7 4"><path d="M1 0h5L3.5 3.5z" fill={dark ? '#000' : '#5a7fb0'} /></svg>
);

const PasteButton = styled(PlainButton)`
  flex-direction: column;
  span {
    margin: 5px 0;
  }
`;

const ClipList = styled.div`
  display: grid;
  grid-template-rows: repeat(3, 26px);
  margin: -4px 0 0 17px;
`;

const ToolStack = styled.div`
  display: grid;
  grid-template-rows: 29px 25px;
  align-content: start;
  gap: 12px 0;
  flex: ${p => (p.fixed ? 'none' : 1)};
  padding-top: 13px;
`;

const Tools = styled.div`
  display: flex;
  align-items: flex-start;
  gap: 4px;
`;

const Cluster = styled.div`
  display: flex;
  height: 26px;
  border: 1px solid #9fb9dc;
  border-radius: 3px;
  background: linear-gradient(#d5e3f4, #c3d6ee 45%, #d6e6f8);
`;

const Tool = styled.button`
  display: flex;
  align-items: center;
  justify-content: center;
  gap: 4px;
  flex: none;
  width: ${p => p.w || 26}px;
  border: 0;
  border-right: 1px solid #b5cae6;
  background: ${p => (p.on ? 'linear-gradient(#f5c98a, #ffab3f 45%, #ffe08a)' : 'none')};
  font: bold ${p => p.size || 15}px/${p => (p.size === 10 ? 9 : 20)}px ${p => (p.sans ? '"Liberation Sans", sans-serif' : '"Liberation Serif", serif')};
  &:last-child {
    border-right: 0;
  }
`;

const Combo = styled.div`
  display: flex;
  align-items: center;
  width: ${p => p.w}px;
  height: 29px;
  margin-right: ${p => (p.tight ? -3 : 0)}px;
  padding: 0 5px 0 2px;
  border: 1px solid #abc1de;
  background: #eaf2fb;
  select {
    appearance: none;
    flex: 1;
    min-width: 0;
    border: 0;
    background: transparent;
    font: 15px/20px ${CJK};
  }
`;

const Divider = styled.div`
  width: 2px;
  height: 82px;
  margin: 5px 8px 0 4px;
  background: #9db7d6;
`;

const Lines = ({ rows, nudge }) => (
  <svg width="15" height="14" viewBox="0 0 15 14" stroke="#111" strokeWidth="1.4">
    {rows.map(([a, b], i) => <path key={i} d={`M${a} ${i * 2.6 + 1 + (nudge || 0)}H${b}`} />)}
  </svg>
);

const three = [[0, 14], [1, 13], [0, 14], [1, 13]];

const FormulaBar = styled.div`
  display: flex;
  flex: none;
  align-items: center;
  height: 20px;
  padding-right: 4px;
  background: #fff;
  border-bottom: 1px solid #6d92c0;
  input {
    width: 147px;
    padding-right: 8px;
    border: 0;
    background: #fff;
    text-align: center;
    font: 15px/18px "Liberation Serif", serif;
  }
  input:last-child {
    flex: 1;
    text-align: left;
  }
`;

const FxButton = styled.button`
  display: flex;
  align-items: center;
  justify-content: space-between;
  width: 76px;
  height: 18px;
  margin-left: 6px !important;
  padding: 0 5px 0 7px !important;
  border: 1px solid #7d9fcb;
  border-width: 0 1px;
  border-radius: 9px 0 0 9px !important;
  background: linear-gradient(#e8f0fb, #b8cfee);
  font: italic bold 14px/18px "Liberation Serif", serif;
  color: #444;
  i {
    width: 8px;
    height: 8px;
    border-radius: 4px;
    background: #f4f0f0;
    box-shadow: -1px -1px 1px #8d9db5;
  }
`;

const SheetGap = styled.div`
  flex: none;
  height: 4px;
  background: #d5e5f8;
  border-bottom: 1px solid #8ea9c9;
`;

const Sheet = styled.table`
  flex: none;
  width: 868px;
  table-layout: fixed;
  border-collapse: separate;
  border-spacing: 0;
  font: 13px/16px ${SERIF};
  background: #fff;
`;

const ColHead = styled.th`
  height: 19px;
  padding: 0;
  border-right: 1px solid #9eb6ce;
  border-bottom: 1px solid #9eb6ce;
  background: ${p => (p.corner ? '#a9c4e9' : 'linear-gradient(#f9fcfd, #d3dbe9)')};
  color: #27413e;
  font: 16px/18px "Liberation Serif", serif;
`;

const RowHead = styled.th`
  padding: 0;
  vertical-align: bottom;
  border-right: 1px solid #9eb6ce;
  border-bottom: 1px solid ${p => (p.on ? '#f29536' : '#9eb6ce')};
  background: ${p => (p.on ? '#ffd58d' : '#e4ecf7')};
  color: #27413e;
  font: 17px/16px "Liberation Serif", serif;
`;

const Cell = styled.td`
  padding: 0 3px 0 ${p => p.indent || 3}px;
  border-right: 1px solid ${p => (p.grid ? '#d0d7e5' : '#000')};
  border-bottom: 1px solid ${p => (p.grid && !p.last ? '#d0d7e5' : '#000')};
  background: ${p => p.fill || 'transparent'};
  color: ${p => (p.blue ? '#1c1cdc' : '#000')};
  font-weight: ${p => (p.bold || p.blue ? 'bold' : 'normal')};
  font-size: ${p => (p.size || 13)}px;
  text-align: ${p => (p.left ? 'left' : 'center')};
  vertical-align: ${p => p.v || 'middle'};
  white-space: nowrap;
  overflow: hidden;
  svg {
    margin: 0 auto 17px 68px;
  }
  b {
    color: #f00000;
  }
`;

const Caption = styled.div`
  padding-bottom: 20px;
`;

const SheetBody = styled.div`
  flex: 1;
  min-height: 0;
  overflow: hidden;
  background: #fff;
  table {
    margin-top: -9px;
  }
`;

const Cols = () => (
  <colgroup>
    {[35, 212, 90, 69, 61, 286, 58, 57].map((w, i) => <col key={i} style={{ width: w }} />)}
  </colgroup>
);

const Row = ({ n, h, on, children }) => (
  <tr style={{ height: h }}>
    <RowHead on={on} scope="row">{n}</RowHead>
    {children}
  </tr>
);

const PINK = '#f2dcdb';

const ViaPicture = () => (
  <svg width="68" height="50" viewBox="0 0 68 50">
    <path d="M1.500 0V34.500H66.500V0M63 0v32" fill="none" stroke="#22dd22" strokeWidth="2.500" />
    <g fill="#fcd0ac" stroke="#d42a2a">
      <path d="M3.500 0h19v31h-19zM33.500 0h8v31h-8zM53.500 0h10v31h-10z" />
      <path d="M22.500 0h11v31h-11z" fill="#fff" />
      <path d="M41.500 0h12v49h-12z" fill="#ffff00" strokeWidth="2" />
    </g>
    <path d="M2 49h63" stroke="#a04848" strokeWidth="2" />
  </svg>
);

const Spreadsheet = () => (
  <Window left={1235} top={340} bottom={0}>
    <QuickRow>
      <QuickTools>
        <PlainButton aria-label="Save"><svg width="15" height="15" viewBox="0 0 15 15"><path d="M0.500 0.500h14v14h-14z" fill="#4a55b8" stroke="#23297a" /><path d="M3 1h9v6H3z" fill="#fff" /><path d="M4 9h7v5H4z" fill="#223" /><path d="M8 10h2v3H8z" fill="#fff" /></svg></PlainButton>
        <PlainButton gap={7} aria-label="Undo"><svg width="14" height="14" viewBox="0 0 14 14" fill="none" stroke="#3e6fc9" strokeWidth="2.500"><path d="M2 2v6h5M2 7c3-6 10-6 10-1 0 3-2 5-5 7" /></svg><Caret /></PlainButton>
        <PlainButton gap={9} aria-label="Redo"><svg width="14" height="14" viewBox="0 0 14 14" fill="none" stroke="#b9c2cf" strokeWidth="2.500"><path d="M12 2v6H7M12 7C9 1 2 1 2 6c0 3 2 5 5 7" /></svg><Caret /></PlainButton>
      </QuickTools>
      <PlainButton aria-label="Customize"><svg width="8" height="8" viewBox="0 0 8 8" fill="#15428b"><path d="M0 0h8v2H0zM0 3h8L4 8z" /></svg></PlainButton>
      <span>P10订单制作差异2024-</span>
    </QuickRow>
    <Tabs>
      {['开始', '插入', '页面布局', '公式', '数据', '审阅', '视图'].map(t => <Tab key={t} on={t === '开始'}>{t}</Tab>)}
    </Tabs>
    <OfficeButton aria-label="Office">
      <svg width="30" height="30" viewBox="0 0 30 30" fill="none" strokeWidth="3">
        <rect x="4" y="3" width="10" height="10" stroke="#e0642c" />
        <rect x="17" y="7" width="8" height="7" stroke="#3fa0dc" />
        <rect x="6" y="17" width="8" height="9" stroke="#f2b320" />
        <rect x="17" y="17" width="8" height="8" stroke="#6cae3e" />
      </svg>
    </OfficeButton>
    <Ribbon>
      <Group w={132}>
        <GroupBody tight>
          <PasteButton>
            <svg width="28" height="34" viewBox="0 0 28 34">
              <rect x="1" y="4" width="24" height="26" rx="2" fill="#efb95a" stroke="#c98f35" />
              <path d="M7 7V4h4q2-5 4 0h4v3z" fill="#d8dce4" stroke="#777" />
              <path d="M10 13h11l6 6v13H10z" fill="#fff" stroke="#8a97ac" />
              <path d="M13 19h8M13 22h11M13 25h11M13 28h11" stroke="#a9b6ca" />
            </svg>
            <span>粘贴</span>
            <Caret />
          </PasteButton>
          <ClipList>
            <PlainButton gap={6}><svg width="14" height="15" viewBox="0 0 14 15" fill="none"><path d="M5 0l3 9M9 0L6 9" stroke="#7d8ea8" strokeWidth="1.500" /><circle cx="4" cy="11" r="2.300" stroke="#2b5bb5" strokeWidth="2" /><circle cx="10" cy="11" r="2.300" stroke="#2b5bb5" strokeWidth="2" /></svg>剪切</PlainButton>
            <PlainButton gap={6}><svg width="15" height="14" viewBox="0 0 15 14" fill="#fff" stroke="#4a6ea8"><path d="M1 1h5l2 2v7H1zM6 4h5l3 3v6H6z" /><path d="M3 4h3M3 6h3M8 8h4M8 10h4" /></svg>复制</PlainButton>
            <PlainButton gap={6}><svg width="15" height="14" viewBox="0 0 15 14"><path d="M1 7l5-3 4 5-5 5z" fill="#f3d55a" stroke="#a88420" /><path d="M7 5l6-5 2 2-5 6z" fill="#6d5340" /></svg>格式刷</PlainButton>
          </ClipList>
        </GroupBody>
        <GroupName><span>剪贴板</span><Launcher /></GroupName>
      </Group>
      <Group w={271}>
        <GroupBody>
          <ToolStack>
            <Tools>
              <Combo w={151} tight><select aria-label="字体"><option>宋体</option></select><Caret /></Combo>
              <Combo w={56}><select aria-label="字号"><option>12</option></select><Caret /></Combo>
              <Cluster>
                <Tool aria-label="增大字号" size={16}>A<svg width="5" height="14"><path d="M0 4h5L2.500 1z" fill="#15428b" /></svg></Tool>
                <Tool aria-label="减小字号" size={12}>A<svg width="5" height="14"><path d="M0 1h5L2.500 4z" fill="#15428b" /></svg></Tool>
              </Cluster>
            </Tools>
            <Tools>
              <Cluster>
                <Tool w={27}>B</Tool>
                <Tool w={27}><i>I</i></Tool>
                <Tool w={38}><u>U</u>&nbsp;<Caret /></Tool>
              </Cluster>
              <Cluster><Tool w={38} aria-label="边框"><svg width="14" height="14" viewBox="0 0 14 14" fill="none" stroke="#445"><path d="M0.500 0v12M6.500 0v12M12.500 0v12M0 0.500h13M0 6.500h13" strokeDasharray="1 1" /><path d="M0 13h14" stroke="#000" strokeWidth="2" /></svg><Caret /></Tool></Cluster>
              <Cluster>
                <Tool w={38} aria-label="填充颜色"><svg width="20" height="19" viewBox="0 0 20 19"><path d="M5 7l6-5 6 5-6 6z" fill="#eef" stroke="#445" /><path d="M17 7q3 3 1 6" fill="none" stroke="#2b5bb5" strokeWidth="2" /><path d="M0 14h20v5H0z" fill="#ff0" /></svg><Caret /></Tool>
                <Tool w={38} aria-label="字体颜色"><svg width="20" height="19" viewBox="0 0 20 19"><text x="4" y="12" fontSize="15" fontFamily="Liberation Serif, serif" fontWeight="bold" fill="#2b4f93">A</text><path d="M0 14h20v5H0z" fill="#f00000" /></svg><Caret /></Tool>
              </Cluster>
              <Cluster><Tool w={38} aria-label="拼音"><svg width="18" height="18" viewBox="0 0 18 18"><text x="1" y="6" fontSize="8" fontFamily="Liberation Sans, sans-serif">wén</text><text x="3" y="17" fontSize="12" fontFamily="Noto Sans CJK SC, sans-serif" fill="#2340a0">文</text></svg><Caret /></Tool></Cluster>
            </Tools>
          </ToolStack>
        </GroupBody>
        <GroupName><span>字体</span><Launcher /></GroupName>
      </Group>
      <Group w={270}>
        <GroupBody>
          <ToolStack fixed>
            <Tools>
              <Cluster>
                <Tool aria-label="顶端对齐"><Lines rows={three} nudge={-1} /></Tool>
                <Tool on aria-label="垂直居中"><Lines rows={three} nudge={1} /></Tool>
                <Tool aria-label="底端对齐"><Lines rows={three} nudge={3} /></Tool>
              </Cluster>
              <Cluster><Tool w={36} aria-label="方向"><svg width="16" height="15" viewBox="0 0 16 15"><text x="0" y="11" fontSize="11" transform="rotate(-35 6 8)" fontFamily="Liberation Serif, serif" fontWeight="bold">ab</text><path d="M6 14l9-8M15 10V6h-4" fill="none" stroke="#556" /></svg><Caret /></Tool></Cluster>
            </Tools>
            <Tools>
              <Cluster>
                <Tool aria-label="左对齐"><Lines rows={[[0, 14], [0, 9], [0, 14], [0, 9], [0, 14]]} /></Tool>
                <Tool aria-label="居中"><Lines rows={[[0, 14], [3, 11], [0, 14], [3, 11], [0, 14]]} /></Tool>
                <Tool aria-label="右对齐"><Lines rows={[[0, 14], [5, 14], [0, 14], [5, 14], [0, 14]]} /></Tool>
              </Cluster>
              <Cluster>
                <Tool w={25} aria-label="减少缩进"><svg width="16" height="14" viewBox="0 0 16 14" fill="none" stroke="#111" strokeWidth="1.300"><path d="M5 1h10M8 4h7M8 7h5M8 10h7M5 13h7" /><path d="M6 6H1M3 4L1 6l2 2" stroke="#2b5bb5" /></svg></Tool>
                <Tool w={25} aria-label="增加缩进"><svg width="16" height="14" viewBox="0 0 16 14" fill="none" stroke="#111" strokeWidth="1.300"><path d="M5 1h10M8 4h7M8 7h5M8 10h7M5 13h7" /><path d="M0 6h5M3 4l2 2-2 2" stroke="#2b5bb5" /></svg></Tool>
              </Cluster>
            </Tools>
          </ToolStack>
          <Divider />
          <ToolStack>
            <PlainButton gap={6}><svg width="16" height="16" viewBox="0 0 16 16" fill="#fff" stroke="#445"><path d="M0 1.500h12M1.500 5.500h9v9h-9z" /><path d="M3 8h6M3 11h6" stroke="#e09030" /><path d="M12 4h3v4h-3" fill="none" /></svg>自动换行</PlainButton>
            <PlainButton gap={6}><svg width="16" height="16" viewBox="0 0 16 16"><path d="M0.500 0.500h15v15h-15zM0 4.500h16M0 11.500h16M8 0v4M8 12v4" fill="#fff" stroke="#445" /><text x="5" y="11" fontSize="10" fontWeight="bold" fontFamily="Liberation Serif, serif">a</text><path d="M1 8h3M12 8h3" stroke="#2b5bb5" /></svg>合并后居中<Caret /></PlainButton>
          </ToolStack>
        </GroupBody>
        <GroupName><span>对齐方式</span><Launcher /></GroupName>
      </Group>
      <Group w={240}>
        <GroupBody>
          <ToolStack>
            <Combo w={180}><select aria-label="数字格式"><option>常规</option></select><Caret /></Combo>
            <Tools>
              <Cluster>
                <Tool w={38} aria-label="会计数字格式"><svg width="17" height="16" viewBox="0 0 17 16"><rect x="1" y="1" width="14" height="8" fill="#7fa3dc" stroke="#2b4f93" /><circle cx="8" cy="5" r="2" fill="#fff" /><ellipse cx="12" cy="10" rx="4" ry="2" fill="#f3c33a" stroke="#a87b10" /><ellipse cx="9" cy="13" rx="4" ry="2" fill="#f3c33a" stroke="#a87b10" /></svg><Caret /></Tool>
                <Tool w={27} sans size={12}>%</Tool>
                <Tool w={26} size={18}>,</Tool>
              </Cluster>
              <Cluster><Tool w={27} sans size={10}>←.0<br />.00</Tool></Cluster>
            </Tools>
          </ToolStack>
        </GroupBody>
        <GroupName wide><span>数字</span></GroupName>
      </Group>
    </Ribbon>
    <FormulaBar>
      <input aria-label="名称框" defaultValue="V23" />
      <Caret dark />
      <FxButton aria-label="插入函数"><i />fx</FxButton>
      <input aria-label="编辑栏" />
    </FormulaBar>
    <SheetGap />
    <Sheet>
      <Cols />
      <thead>
        <tr>
          <ColHead corner><svg width="30" height="16"><path d="M28 3v11H17z" fill="#e6eefa" /></svg></ColHead>
          {'ABCDEFG'.split('').map(c => <ColHead key={c}>{c === 'G' ? '' : c}</ColHead>)}
        </tr>
      </thead>
    </Sheet>
    <SheetBody>
      <Sheet>
        <Cols />
        <tbody>
          <Row h={8}>
            <Cell />
            <Cell colSpan={3} rowSpan={4} v="bottom">
              <ViaPicture />
              <Caption>选择性树脂塞孔（非盲孔板）</Caption>
            </Cell>
            <Cell rowSpan={5} left v="top">
              ①板厚≤2.5mm；<br />
              ②2.5mm＜板厚≤3.0mm，且厚径比≤12:1；<br />
              ③3.0mm＜板厚≤3.5mm，且厚径比≤7:1；<br />
              2. 最小/平均孔铜≤18/20μm：厚径比≤18:1；<br />
              3. 最小/平均孔铜≤25.4/25.4μm：<br />
              ①板厚＜1.8mm；<br />
              ②1.8mm＜板厚≤2.5mm，且厚径比≤12:1；<br />
              ③2.5mm＜板厚≤3mm，且厚径比≤8:1；<br />
              ④3.0mm＜板厚≤3.5mm，且厚径比≤6:1；
            </Cell>
            <Cell />
            <Cell />
          </Row>
          <Row n={19} h={32}><Cell>1OZ</Cell><Cell size={16} v="bottom">4.8</Cell><Cell /></Row>
          <Row n={20} h={32}><Cell>1.43OZ</Cell><Cell size={16}>5.5</Cell><Cell /></Row>
          <Row n={21} h={32}><Cell>2OZ</Cell><Cell size={16} v="bottom">5.7</Cell><Cell /></Row>
          <Row n={22} h={100}>
            <Cell blue>0.33OZ<br />（0.5OZ减薄铜到9±1um）</Cell>
            <Cell blue left colSpan={3}>
              非盲孔板，POFV要求，盖覆铜厚度<br />
              ＞6μm<br />
              (流程增加了一次图形电镀：电镀<br />
              [负片电镀→板镀]→图形电镀[图<br />
              形电镀]→外层干膜[……]
            </Cell>
            <Cell blue size={16}>3.8</Cell>
            <Cell />
          </Row>
          <Row n={23} h={152} on>
            <Cell colSpan={7} left>
              注：<br />
              1.存在单端、差分等共面地阻抗时，阻抗线对应的铜皮需要按正常线路补偿；<br />
              2.对应阻抗测试条作相同处理，即阻抗测试条的补偿值与图形内阻抗线保持一致；<br />
              3.所有的线必须转化为line属性（网格线可不做转化，不动补，但须保证补偿后网格最小线宽和间距）；<br />
              4.以上为整体补偿值，补偿完成后，必须进行动态补偿（含阻抗测试条）；<br />
              5. BGA与导体间距不足时，允许单边削盘0.5mil。<br />
              6. SMT与导体间距不足时，最大允许<b>整体削盘0.2mil。</b><br />
              7. 针对选择性树脂塞孔非POFV产品，间距不足时，非阻抗线可以按括号内补偿值进行补偿，阻抗线不允许按括号内补偿值进行补偿。
            </Cell>
          </Row>
          <Row n={24} h={19}>{[1, 2, 3, 4, 5, 6, 7].map(i => <Cell grid key={i} />)}</Row>
          <Row n={25} h={29}>{[1, 2, 3, 4, 5, 6, 7].map(i => <Cell grid last key={i} />)}</Row>
          <Row n={26} h={19}><Cell colSpan={7} left bold size={15} fill="#ffff99">2. 盲孔板(外层负片)</Cell></Row>
          <Row n={27} h={19}>
            <Cell rowSpan={3} bold size={14} fill={PINK}>基铜</Cell>
            <Cell rowSpan={3} colSpan={3} bold size={14} fill={PINK}>产品结构</Cell>
            <Cell rowSpan={3} bold size={14} fill={PINK}>产品结构能力限制</Cell>
            <Cell colSpan={2} left indent={20} bold size={13} fill={PINK}>补偿前</Cell>
          </Row>
          <Row n={28} h={19}>
            <Cell rowSpan={2} bold size={14} fill={PINK}>常规线</Cell>
            <Cell rowSpan={2} fill={PINK} />
          </Row>
          <Row n={29} h={64} />
          <Row h={80}>
            <Cell />
            <Cell colSpan={3} left v="top">1、叠层结构：core+core结构、<br />1+core结构</Cell>
            <Cell />
            <Cell fill="#ffc000" />
            <Cell />
          </Row>
        </tbody>
      </Sheet>
    </SheetBody>
  </Window>
);

/* ---------- pen marks over the windows ---------- */

const Marks = styled.svg`
  position: absolute;
  left: 1050px;
  top: 890px;
  pointer-events: none;
`;

const App = () => (
  <Desktop>
    <GlobalStyle />
    <Workspace>
      <BackWindow />
      <MainWindow />
      <ChecklistEditor />
      <ResultsHistogram />
      <ResultsViewer />
      <Spreadsheet />
      <Marks width="480" height="190" viewBox="1050 890 480 190" stroke="#ff0000" fill="#ff0000">
        <path d="M1059 963L1107 1045M1484 990L1503 922" strokeWidth="4" strokeLinecap="round" fill="none" />
        <path d="M1118 1063L1097 1044L1112 1036Z" />
        <path d="M1510 898L1495 922L1511 926Z" />
      </Marks>
    </Workspace>
    <Taskbar />
  </Desktop>
);

export default App;
